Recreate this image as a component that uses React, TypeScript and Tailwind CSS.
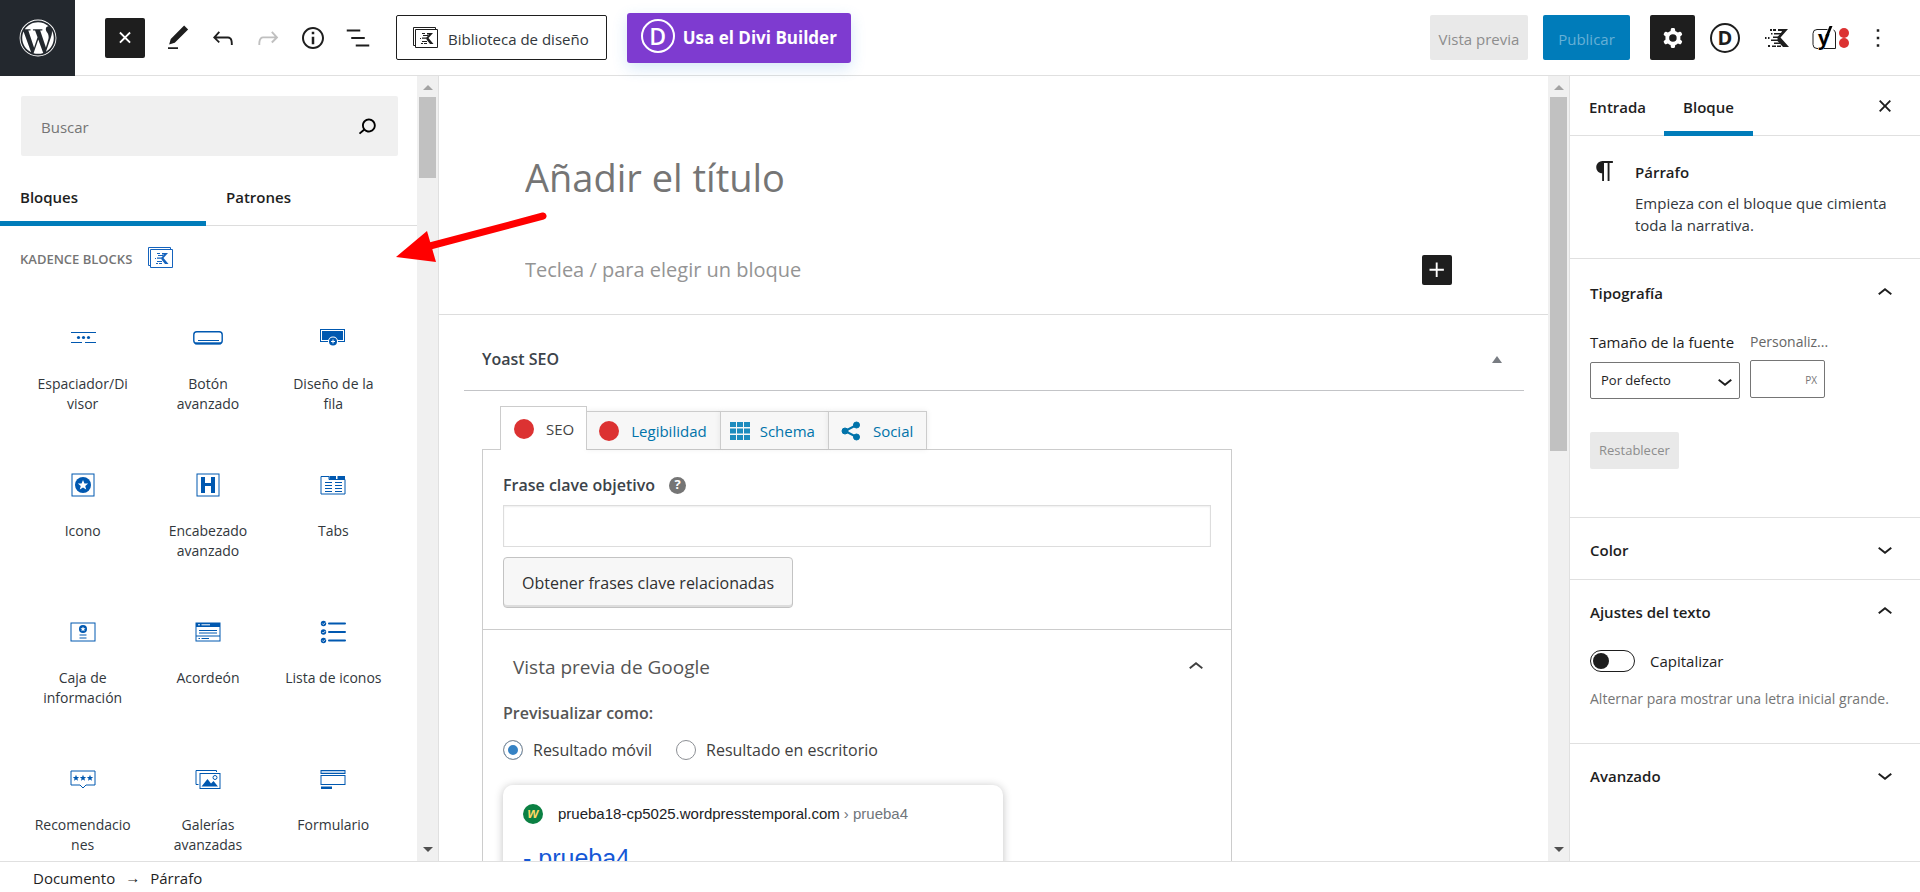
import { useState } from "react";
import type { ReactNode } from "react";
import { FaWordpress } from "react-icons/fa";

// 24x24 icon paths used in the editor chrome
const icons = {
  plus: "M11 12.5V17.5H12.5V12.5H17.5V11H12.5V6H11V11H6V12.5H11Z",
  close:
    "M12 13.06l3.712 3.713 1.061-1.06L13.061 12l3.712-3.712-1.06-1.06L12 10.938 8.288 7.227l-1.061 1.06L10.939 12l-3.712 3.712 1.06 1.061L12 13.061z",
  edit: "M20.1 5.1L16.9 2 6.2 12.7l-1.3 4.4 4.5-1.3L20.1 5.1zM4 20.8h8v-1.5H4v1.5z",
  undo: "M18.3 11.7c-.6-.6-1.4-.9-2.3-.9H6.7l2.9-3.3-1.1-1-4.5 5L8.5 16l1-1-2.7-2.7H16c.5 0 .9.2 1.3.5 1 1 1 3.4 1 4.5v.3h1.5v-.2c0-1.5 0-4.3-1.5-5.7z",
  redo: "M15.6 6.5l-1.1 1 2.9 3.3H8c-.9 0-1.7.3-2.3.9-1.4 1.5-1.4 4.2-1.4 5.6v.2h1.5v-.3c0-1.1 0-3.5 1-4.5.3-.3.7-.5 1.3-.5h9.2L14.5 15l1.1 1.1 4.6-4.6-4.6-5z",
  info: "M12 3.2c-4.8 0-8.8 3.9-8.8 8.8 0 4.8 3.9 8.8 8.8 8.8 4.8 0 8.8-3.9 8.8-8.8 0-4.8-4-8.8-8.8-8.8zm0 16c-4 0-7.2-3.3-7.2-7.2C4.8 8 8 4.8 12 4.8s7.2 3.3 7.2 7.2c0 4-3.2 7.2-7.2 7.2zM11 17h2v-6h-2v6zm0-8h2V7h-2v2z",
  list: "M13.8 5.2H3v1.5h10.8V5.2zm-3.6 12v1.5H21v-1.5H10.2zm7.2-6H6.6v1.5h10.8v-1.5z",
  cog: "M10.289 4.836A1 1 0 0111.275 4h1.306a1 1 0 01.987.836l.244 1.466c.787.26 1.503.679 2.108 1.218l1.393-.522a1 1 0 011.216.437l.653 1.13a1 1 0 01-.23 1.273l-1.148.944a6.025 6.025 0 010 2.435l1.149.946a1 1 0 01.23 1.272l-.653 1.13a1 1 0 01-1.216.437l-1.394-.522c-.605.54-1.32.958-2.108 1.218l-.244 1.466a1 1 0 01-.987.836h-1.306a1 1 0 01-.986-.836l-.244-1.466a5.995 5.995 0 01-2.108-1.218l-1.394.522a1 1 0 01-1.217-.436l-.653-1.131a1 1 0 01.23-1.272l1.149-.946a6.026 6.026 0 010-2.435l-1.148-.944a1 1 0 01-.23-1.272l.653-1.131a1 1 0 011.217-.437l1.393.522a5.994 5.994 0 012.108-1.218l.244-1.466zM14.929 12a3 3 0 11-6 0 3 3 0 016 0z",
  search:
    "M13.5 6C10.5 6 8 8.5 8 11.5c0 1.1.3 2.1.9 3l-3.4 3 1 1.1 3.4-2.9c1 .9 2.2 1.4 3.6 1.4 3 0 5.5-2.5 5.5-5.5C19 8.5 16.5 6 13.5 6zm0 9.5c-2.2 0-4-1.8-4-4s1.8-4 4-4 4 1.8 4 4-1.8 4-4 4z",
  paragraph:
    "M18.3 4H9.9v-.1l-.9.2c-2.3.4-4 2.4-4 4.8s1.7 4.4 4 4.8l.7.1V20h1.5V5.5h2.9V20h1.5V5.5h2.7V4z",
  up: "M6.5 12.4L12 8l5.5 4.4-.9 1.2L12 10l-4.5 3.6-1-1.2z",
  down: "M17.5 11.6L12 16l-5.5-4.4.9-1.2L12 14l4.5-3.6 1 1.2z",
  more: "M13 19h-2v-2h2v2zm0-6h-2v-2h2v2zm0-6h-2V5h2v2z",
};

function Icon({ name, className = "size-[30px]" }: { name: keyof typeof icons; className?: string }) {
  return (
    <svg viewBox="0 0 24 24" className={`shrink-0 ${className}`} fill="currentColor" fillRule="evenodd" aria-hidden="true">
      <path d={icons[name]} />
    </svg>
  );
}

function KadenceMark({ className }: { className: string }) {
  return (
    <svg viewBox="0 0 24 20" className={`shrink-0 ${className}`} fill="currentColor" aria-hidden="true">
      <path d="M13 1h10l-7.500 8.500L24 19h-6l-5.500-6V9l4.500-5.500L16.500 3H13z" />
      <path d="M5 1h2v2H5zM8 1h3v2H8zM6 5h1.500v1.500H6zM9 5h7v1.500H9zM0 9h1.500v2H0zM3 9h1.500v2H3zM8 8.500h7v1.500H8zM6 11.500h8V13H6zM9 14.500h6V16H9zM3 17h2v2H3zM7 17.500h4V19H7zM12 17.500h4V19h-4z" />
    </svg>
  );
}

// Mark inside two stacked frames
function KadenceFrame({ className }: { className: string }) {
  return (
    <svg viewBox="0 0 25 21" className={`h-[21px] w-[25px] shrink-0 ${className}`} fill="none" stroke="currentColor" aria-hidden="true">
      <path d="M3 18.5H.5V.5h22v2" />
      <path d="M2.500 2.500h22v18h-22z" />
      <g fill="currentColor" stroke="none">
        <path d="M14 6h6l-4.500 5 5 6H17l-3.500-4.500v-2l2.500-3h-2z" />
        <path d="M9 6h3v1H9zM10 8h5v1h-5zM7 11h1v1H7zM9 10.500h5v1.200H9zM9 14h5v1H9zM8 16h2v1H8zM11 16h3v1h-3z" />
      </g>
    </svg>
  );
}

function DiviMark({ className }: { className: string }) {
  return (
    <span className={`flex items-center justify-center rounded-full border-2 border-current leading-none ${className}`}>D</span>
  );
}

// Rounded tile with a long-armed letter standing across its edge
function YoastMark() {
  return (
    <svg viewBox="0 0 25 28" className="h-7 w-[25px] overflow-visible" aria-hidden="true">
      <path d="M6 24.500H5a4 4 0 0 1-4-4v-11a4 4 0 0 1 4-4h10.500M12 24.500h11.500V9q0-2-2-3" fill="none" stroke="#1e1e1e" />
      <text x="6" y="21" fontSize="20" fontWeight="700">y</text>
      <path d="M13.500 12L17.500 2h3L16 13z" />
    </svg>
  );
}

const star = "M0-3.200L.9-1l2.300.1L1.400.6 2 2.800 0 1.600-2 2.800-1.400.6-3.200-.9-.9-1z";

const blocks: { name: string; icon: ReactNode }[] = [
  {
    name: "Espaciador/Di\nvisor",
    icon: (
      <>
        <path d="M3 9.500h25M3 19.500h11M17 19.500h11" stroke="currentColor" />
        <g fill="currentColor">
          <circle cx="10.500" cy="14.500" r="1.600" />
          <circle cx="15.500" cy="14.500" r="1.600" />
          <circle cx="20.500" cy="14.500" r="1.600" />
        </g>
      </>
    ),
  },
  {
    name: "Botón\navanzado",
    icon: (
      <>
        <rect x=".8" y="8.800" width="28.400" height="12" rx="3" stroke="currentColor" strokeWidth="1.400" />
        <path d="M2 20.300h26" stroke="currentColor" strokeWidth="2" />
        <path d="M5 17.500h21" stroke="currentColor" />
      </>
    ),
  },
  {
    name: "Diseño de la\nfila",
    icon: (
      <>
        <rect x="2.500" y="6.500" width="24" height="12" stroke="currentColor" />
        <rect x="4" y="8" width="21" height="9" fill="currentColor" />
        <circle cx="15" cy="18.500" r="5" fill="white" />
        <circle cx="15" cy="18.500" r="4" fill="currentColor" />
        <path d="M15 16.500v4M13 18.500h4" stroke="white" />
      </>
    ),
  },
  {
    name: "Icono",
    icon: (
      <>
        <rect x="4" y="4" width="22" height="22" stroke="currentColor" />
        <circle cx="15" cy="15" r="8" fill="currentColor" />
        <path d={star} fill="white" transform="translate(15 15) scale(1.600)" />
      </>
    ),
  },
  {
    name: "Encabezado\navanzado",
    icon: (
      <>
        <rect x="4" y="4" width="22" height="22" stroke="currentColor" />
        <g fill="currentColor">
          <rect x="8" y="7" width="4" height="16" />
          <rect x="18" y="7" width="4" height="16" />
          <rect x="11" y="13" width="8" height="3" />
        </g>
      </>
    ),
  },
  {
    name: "Tabs",
    icon: (
      <>
        <path d="M3 6.500h8v3h16V24H3z" stroke="currentColor" />
        <path d="M11.500 6H18v3.500h-6.500zM19.500 6H27v3.500h-7.500z" fill="currentColor" />
        <path d="M7 12.500h7M17 12.500h7M7 15.500h7M17 15.500h7M7 18.500h7M17 18.500h7M7 21.500h7M17 21.500h7" stroke="currentColor" />
      </>
    ),
  },
  {
    name: "Caja de\ninformación",
    icon: (
      <>
        <rect x="3" y="6" width="24" height="18" stroke="currentColor" />
        <circle cx="15" cy="12" r="4" fill="currentColor" />
        <path d={star} fill="white" transform="translate(15 12) scale(.8)" />
        <path d="M11.500 18h7M11.500 21h7" stroke="currentColor" />
      </>
    ),
  },
  {
    name: "Acordeón",
    icon: (
      <>
        <rect x="3" y="6" width="24" height="18" stroke="currentColor" />
        <path d="M3 6h24v4H3z" fill="currentColor" />
        <path d="M5 7.800h2M8.500 7.800H17" stroke="white" />
        <path d="M6 13.500h18M6 16h18M3 19h24M5.500 21.500h1.500M8.500 21.500H16" stroke="currentColor" />
      </>
    ),
  },
  {
    name: "Lista de iconos",
    icon: (
      <>
        <g fill="currentColor">
          <circle cx="5.500" cy="6.500" r="2.700" />
          <circle cx="5.500" cy="15" r="2.700" />
          <circle cx="5.500" cy="23.500" r="2.700" />
        </g>
        <path d="M11 6.500h16M11 15h16M11 23.500h16" stroke="currentColor" strokeWidth="2" strokeLinecap="round" />
        <path d="M4.300 6.500l1 1 2-2M4.300 15l1 1 2-2M4.300 23.500l1 1 2-2" stroke="white" strokeWidth=".8" />
      </>
    ),
  },
  {
    name: "Recomendacio\nnes",
    icon: (
      <>
        <path d="M3 7h24v14h-9l-3 3-3-3H3z" stroke="currentColor" />
        <path d={star} fill="currentColor" transform="translate(8 14)" />
        <path d={star} fill="currentColor" transform="translate(15 14)" />
        <path d={star} fill="currentColor" transform="translate(22 14)" />
      </>
    ),
  },
  {
    name: "Galerías\navanzadas",
    icon: (
      <>
        <path d="M5.500 20.500H3v-14h20.500V8" stroke="currentColor" />
        <rect x="7" y="9.500" width="20" height="15" stroke="currentColor" />
        <path d="M8.500 22.500l6-7.500 3.500 4.500 2.500-2.500 4.500 5.500z" fill="currentColor" />
        <circle cx="22" cy="13.500" r="2" stroke="currentColor" />
      </>
    ),
  },
  {
    name: "Formulario",
    icon: (
      <>
        <rect x="3" y="6.500" width="24" height="3" fill="#b9d2ec" stroke="currentColor" />
        <rect x="3" y="11.500" width="24" height="9" stroke="currentColor" />
        <path d="M3 22.500h11V25H3z" fill="currentColor" />
      </>
    ),
  },
];

// Grey track with a thumb; the height of the thumb is given by its class
function Scrollbar({ thumb }: { thumb: string }) {
  return (
    <div className="flex w-[21px] shrink-0 flex-col items-center justify-between bg-[#f0f0f0] pt-[9px] pb-[9px]" aria-hidden="true">
      <div className="flex w-full flex-col items-center gap-[7px]">
        <div className="border-x-[5px] border-b-[5px] border-x-transparent border-b-[#a3a3a3]" />
        <div className={`w-[17px] bg-[#c1c1c1] ${thumb}`} />
      </div>
      <div className="border-x-[5px] border-t-[5px] border-x-transparent border-t-[#505050]" />
    </div>
  );
}

function Header() {
  return (
    <header className="flex h-[76px] shrink-0 items-center justify-between border-b border-[#e0e0e0]">
      <div className="flex items-center">
        <a href="#" aria-label="Ver entradas" className="flex h-[76px] w-[75px] items-center justify-center bg-[#23282e] text-white">
          <FaWordpress className="size-[38px]" />
        </a>
        <div className="ml-[30px] flex items-center gap-[15px] text-[#1e1e1e]">
          <button aria-label="Cerrar insertador" className="mr-[3px] flex size-10 items-center justify-center rounded-[2px] bg-[#1e1e1e] text-white">
            <Icon name="plus" className="size-[30px] rotate-45" />
          </button>
          <button aria-label="Editar"><Icon name="edit" /></button>
          <button aria-label="Deshacer"><Icon name="undo" /></button>
          <button aria-label="Rehacer" disabled className="text-[#c0c0c0]"><Icon name="redo" /></button>
          <button aria-label="Detalles"><Icon name="info" /></button>
          <button aria-label="Vista de lista"><Icon name="list" /></button>
        </div>
        <button className="ml-[23px] flex h-[45px] items-center gap-[10px] rounded-[2px] border border-[#1e1e1e] px-4 text-[15px] text-[#32373c]">
          <KadenceFrame className="text-[#1e1e1e]" />
          <span className="pt-[3px] pr-px">Biblioteca de diseño</span>
        </button>
        <button className="ml-5 flex h-[50px] items-center gap-2 rounded-[3px] bg-[#7e3bd0] px-[14px] text-[17px] font-bold text-white shadow-[0_5px_15px_rgba(43,135,218,0.2)]">
          <DiviMark className="mb-[3px] size-[34px] text-[23px] font-semibold" />
          Usa el Divi Builder
        </button>
      </div>
      <div className="flex items-center text-[#1e1e1e]">
        <button disabled className="h-[45px] w-[98px] rounded-[2px] bg-[#e9e9e9] pt-[3px] text-[15px] text-[#8d8d8d]">Vista previa</button>
        <button disabled className="ml-[15px] h-[45px] w-[87px] rounded-[2px] bg-[#007cba] pt-[3px] text-[15px] text-[#66b0d6]">Publicar</button>
        <button aria-label="Ajustes" className="ml-5 flex size-[45px] items-center justify-center rounded-[2px] bg-[#1e1e1e] text-white">
          <Icon name="cog" />
        </button>
        <button aria-label="Divi" className="ml-[15px]">
          <DiviMark className="size-[30px] text-[20px] font-bold" />
        </button>
        <button aria-label="Kadence" className="ml-[25px]">
          <KadenceMark className="h-5 w-6" />
        </button>
        <button aria-label="Yoast SEO" className="ml-[23px] flex items-center gap-[2px]">
          <YoastMark />
          <span className="flex flex-col">
            <span className="size-[10px] rounded-full bg-[#dc3232]" />
            <span className="size-[10px] rounded-full bg-[#dc3232]" />
          </span>
        </button>
        <button aria-label="Opciones" className="mr-[27px] ml-[14px]">
          <Icon name="more" />
        </button>
      </div>
    </header>
  );
}

function Inserter() {
  return (
    <aside className="flex w-[439px] shrink-0 border-r border-[#e0e0e0]">
      <div className="min-w-0 flex-1 overflow-hidden">
        <label className="mx-[21px] mt-5 mr-[19px] flex h-[60px] items-center rounded-[2px] bg-[#f0f0f0] pr-4 pl-5">
          <input type="search" placeholder="Buscar" aria-label="Buscar" className="min-w-0 flex-1 bg-transparent pt-[2px] text-[15px] outline-none placeholder:text-[#757575]" />
          <Icon name="search" className="size-[30px] text-black" />
        </label>
        <div role="tablist" className="mt-[15px] flex h-[55px] border-b border-[#ddd] text-[15px] font-semibold text-[#1e1e1e]">
          <button role="tab" aria-selected="true" className="h-[55px] w-[206px] border-b-[5px] border-[#007cba] pt-[3px] pl-5 text-left">
            Bloques
          </button>
          <button role="tab" aria-selected="false" className="pb-[2px] pl-5 text-left">Patrones</button>
        </div>
        <h2 className="mt-5 flex h-[26px] items-center gap-4 pl-5 text-[13px] font-semibold text-[#757575] uppercase">
          <span className="pt-[2px]">Kadence Blocks</span>
          <KadenceFrame className="mb-1 text-[#1563bd]" />
        </h2>
        <div className="mt-[26px] mr-[21px] ml-5 grid grid-cols-3">
          {blocks.map((block) => (
            <button key={block.name} className="flex h-[147px] flex-col items-center pt-[25px] text-[14px] leading-5 text-[#32373c]">
              <svg viewBox="0 0 30 30" className="size-[30px] text-[#0058b0]" fill="none" aria-hidden="true">
                {block.icon}
              </svg>
              <span className="mt-[21px] whitespace-pre-line">{block.name}</span>
            </button>
          ))}
        </div>
      </div>
      <Scrollbar thumb="h-[81px]" />
    </aside>
  );
}

const tabBase = "relative flex items-center border border-[#ccc] text-[15px]";
const tabIdle = "-ml-px h-[38px] border-b-0 bg-[#f7f7f7] text-[#0073aa] shadow-[0_0_6px_rgba(0,0,0,0.08)]";

function YoastBox() {
  const [device, setDevice] = useState("mobile");

  return (
    <section className="mr-6 ml-[25px] pt-4">
      <div className="flex h-[60px] items-center justify-between border-b border-[#c3c4c7] pr-[22px] pb-[3px] pl-[18px]">
        <h2 className="text-[16px] font-semibold text-[#3c434a]">Yoast SEO</h2>
        <button aria-label="Alternar panel">
          <span className="block border-x-[5px] border-b-[7px] border-x-transparent border-b-[#787c82]" />
        </button>
      </div>
      <div className="mt-[15px] ml-[18px] max-w-[750px]">
        <div role="tablist" className="ml-[18px] flex items-end">
          <button role="tab" aria-selected="true" className={`${tabBase} z-10 -mb-px h-11 gap-3 border-b-0 bg-white pr-3 pl-[13px] text-[#444]`}>
            <span className="size-5 rounded-full bg-[#dc3232]" />
            <span className="pt-[2px]">SEO</span>
          </button>
          <button role="tab" className={`${tabBase} ${tabIdle} gap-3 pr-[13px] pl-3`}>
            <span className="size-5 rounded-full bg-[#dc3232]" />
            <span className="pt-[2px]">Legibilidad</span>
          </button>
          <button role="tab" className={`${tabBase} ${tabIdle} gap-[10px] pr-[13px] pl-[9px]`}>
            <svg viewBox="0 0 20 18" className="h-[18px] w-5" fill="#1e8cbe" aria-hidden="true">
              <path d="M0 0h6v5H0zM7 0h6v5H7zM14 0h6v5h-6zM0 6.500h6v5H0zM7 6.500h6v5H7zM14 6.500h6v5h-6zM0 13h6v5H0zM7 13h6v5H7zM14 13h6v5h-6z" />
            </svg>
            <span className="pt-[2px]">Schema</span>
          </button>
          <button role="tab" className={`${tabBase} ${tabIdle} gap-3 pr-[13px] pl-3`}>
            <svg viewBox="0 0 20 20" className="size-5" fill="#0073aa" stroke="#0073aa" aria-hidden="true">
              <path d="M15.500 4L4 10l11.500 6" fill="none" strokeWidth="2" />
              <circle cx="15.500" cy="4" r="3" />
              <circle cx="4" cy="10" r="3" />
              <circle cx="15.500" cy="16" r="3" />
            </svg>
            <span className="pt-[2px]">Social</span>
          </button>
        </div>
        <div className="border border-[#ccc]">
          <div className="border-b border-[#ccc] px-5 pt-[23px] pb-[21px]">
            <div className="flex items-center gap-[14px]">
              <label htmlFor="keyphrase" className="text-[16px] leading-6 font-semibold text-[#3c434a]">Frase clave objetivo</label>
              <a href="#" aria-label="Ayuda" className="flex size-[17px] items-center justify-center rounded-full bg-[#757575] text-[13px] font-bold text-white">?</a>
            </div>
            <input id="keyphrase" type="text" className="mt-2 block h-[42px] w-full border border-[#ddd] px-2 shadow-[inset_0_1px_2px_rgba(0,0,0,0.07)] outline-none" />
            <button className="mt-[10px] h-[51px] rounded-[4px] border border-[#c3c3c3] bg-[#f7f7f7] px-[18px] text-[16px] text-[#303030] shadow-[inset_0_-2px_0_#ddd]">
              Obtener frases clave relacionadas
            </button>
          </div>
          <div className="px-5 pt-[21px]">
            <button aria-expanded="true" className="flex w-full items-center justify-between pl-[10px] text-[19px] leading-8 text-[#555]">
              Vista previa de Google
              <Icon name="up" className="size-[30px] text-[#404040]" />
            </button>
            <fieldset className="mt-[18px] text-[16px] text-[#404040]">
              <legend className="leading-6 font-semibold text-[#555]">Previsualizar como:</legend>
              <div className="mt-[13px] flex items-center gap-6">
                <label className="flex items-center gap-[10px]">
                  <input
                    type="radio"
                    name="device"
                    checked={device === "mobile"}
                    onChange={() => setDevice("mobile")}
                    className="size-5 appearance-none rounded-full border border-[#8c8f94] bg-white checked:bg-[#3582c4] checked:shadow-[inset_0_0_0_4px_white]"
                  />
                  Resultado móvil
                </label>
                <label className="flex items-center gap-[10px]">
                  <input
                    type="radio"
                    name="device"
                    checked={device === "desktop"}
                    onChange={() => setDevice("desktop")}
                    className="size-5 appearance-none rounded-full border border-[#8c8f94] bg-white checked:bg-[#3582c4] checked:shadow-[inset_0_0_0_4px_white]"
                  />
                  Resultado en escritorio
                </label>
              </div>
            </fieldset>
            <div className="mt-[23px] h-[240px] w-[500px] rounded-[10px] bg-white px-5 pt-[18px] font-['Liberation_Sans',sans-serif] shadow-[0_1px_8px_rgba(32,33,36,0.28)]">
              <div className="flex items-center text-[15px] text-[#202124]">
                <span className="mr-[15px] flex size-5 items-center justify-center rounded-full bg-[#0b8043] pb-[2px] text-[14px] font-bold text-[#fdd663] italic">w</span>
                prueba18-cp5025.wordpresstemporal.com
                <span className="ml-1 text-[#70757a]">› prueba4</span>
              </div>
              <a href="#" className="mt-[17px] block text-[25px] leading-[30px] text-[#1558d6]">- prueba4</a>
            </div>
          </div>
        </div>
      </div>
    </section>
  );
}

function Editor() {
  return (
    <main className="flex min-w-0 flex-1">
      <div className="min-w-0 flex-1 overflow-hidden">
        <div className="border-b border-[#ddd] pt-[71px] pr-24 pb-[29px] pl-[86px]">
          <input aria-label="Añadir el título" placeholder="Añadir el título" className="block h-[60px] w-full text-[38px] outline-none placeholder:text-[#757575]" />
          <div className="mt-12 flex h-[30px] items-center">
            <input aria-label="Bloque vacío" placeholder="Teclea / para elegir un bloque" className="min-w-0 flex-1 text-[20px] outline-none placeholder:text-[#949494]" />
            <button aria-label="Añadir bloque" className="rounded-[2px] bg-[#1e1e1e] text-white">
              <Icon name="plus" />
            </button>
          </div>
        </div>
        <YoastBox />
      </div>
      <Scrollbar thumb="h-[354px]" />
    </main>
  );
}

function PanelTitle({ children, open = false }: { children: ReactNode; open?: boolean }) {
  return (
    <h2>
      <button aria-expanded={open} className="flex h-[61px] w-full items-center justify-between pt-1 pr-5 pl-5 text-[15px] font-semibold text-[#1e1e1e]">
        {children}
        <Icon name={open ? "up" : "down"} className={open ? "mb-[2px] size-[30px]" : "mb-1 size-[30px]"} />
      </button>
    </h2>
  );
}

function Settings() {
  const [dropCap, setDropCap] = useState(false);

  return (
    <aside className="w-[351px] shrink-0 overflow-hidden border-l border-[#e0e0e0] text-[15px] text-[#1e1e1e]">
      <div className="flex h-[60px] items-center border-b border-[#e0e0e0] font-semibold">
        <button className="h-[60px] pt-1 pr-[18px] pl-[19px]">Entrada</button>
        <button className="h-[60px] border-b-[5px] border-[#007cba] px-[19px] pt-[9px]">Bloque</button>
        <button aria-label="Cerrar ajustes" className="mr-5 ml-auto"><Icon name="close" /></button>
      </div>
      <div className="flex gap-[15px] border-b border-[#e0e0e0] pt-5 pr-4 pb-[22px] pl-5">
        <Icon name="paragraph" />
        <div>
          <h2 className="mt-1 leading-6 font-semibold">Párrafo</h2>
          <p className="mt-2 leading-[22px] whitespace-pre-line text-[#32373c]">{"Empieza con el bloque que cimienta\ntoda la narrativa."}</p>
        </div>
      </div>
      <section className="border-b border-[#e0e0e0] pt-[2px] pb-12">
        <PanelTitle open>Tipografía</PanelTitle>
        <div className="flex gap-[10px] px-5 pt-2">
          <div className="w-[150px]">
            <label htmlFor="font-size" className="block leading-6 whitespace-nowrap">Tamaño de la fuente</label>
            <div className="relative mt-2">
              <select id="font-size" className="h-[37px] w-full appearance-none rounded-[2px] border border-[#757575] pl-[10px] text-[13px]">
                <option>Por defecto</option>
              </select>
              <Icon name="down" className="pointer-events-none absolute top-1 right-0 size-[30px]" />
            </div>
          </div>
          <div className="w-20">
            <label htmlFor="custom-size" className="block text-[14px] leading-6 whitespace-nowrap text-[#666]">Personaliz...</label>
            <div className="mt-[6px] flex h-[38px] w-[75px] items-center rounded-[2px] border border-[#757575] pt-[2px] pr-[7px]">
              <input id="custom-size" type="text" className="min-w-0 flex-1 outline-none" />
              <span className="text-[10px] text-[#757575]">PX</span>
            </div>
          </div>
        </div>
        <button disabled className="mt-[33px] ml-5 h-[37px] rounded-[2px] bg-[#e9e9e9] px-[9px] text-[13px] text-[#8d8d8d]">Restablecer</button>
      </section>
      <section className="border-b border-[#e0e0e0]">
        <PanelTitle>Color</PanelTitle>
      </section>
      <section className="border-b border-[#e0e0e0] pb-8">
        <PanelTitle open>Ajustes del texto</PanelTitle>
        <div className="px-5 pt-1">
          <label className="flex h-8 items-center gap-[15px]">
            <input
              type="checkbox"
              role="switch"
              checked={dropCap}
              onChange={() => setDropCap(!dropCap)}
              className="h-[22px] w-[45px] appearance-none rounded-full border border-[#1e1e1e] before:m-[2px] before:block before:size-4 before:rounded-full before:bg-[#1e1e1e] checked:before:ml-[25px]"
            />
            Capitalizar
          </label>
          <p className="mt-[10px] text-[14px] leading-6 whitespace-nowrap text-[#757575]">Alternar para mostrar una letra inicial grande.</p>
        </div>
      </section>
      <PanelTitle>Avanzado</PanelTitle>
    </aside>
  );
}

export default function App() {
  return (
    <div className="relative flex h-screen flex-col overflow-hidden bg-white font-['Open_Sans','Noto_Sans',sans-serif]">
      <Header />
      <div className="flex min-h-0 flex-1">
        <Inserter />
        <Editor />
        <Settings />
      </div>
      <footer className="flex h-[31px] shrink-0 items-center border-t border-[#e0e0e0] pl-[33px] text-[15px] text-[#1e1e1e]">
        <nav aria-label="Ruta del bloque" className="flex items-center gap-[10px] pt-[3px]">
          <button>Documento</button>
          <span className="pb-1 text-[15px] leading-5">→</span>
          <button>Párrafo</button>
        </nav>
      </footer>
      {/* red pointer over the inserter panel */}
      <svg viewBox="0 0 155 54" className="pointer-events-none absolute top-[211px] left-[395px] h-[54px] w-[155px]" aria-hidden="true">
        <path d="M35 35L148 5" stroke="#f00" strokeWidth="7" strokeLinecap="round" />
        <path d="M1 46L32 20l9 31z" fill="#f00" />
      </svg>
    </div>
  );
}
